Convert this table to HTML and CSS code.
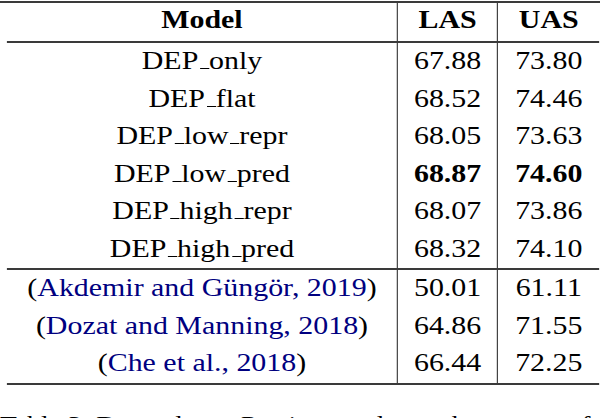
FILE: index.html
```html
<!DOCTYPE html>
<html lang="en">
<head>
<meta charset="utf-8">
<title>Table 3</title>
<link rel="stylesheet" href="styles.css">
</head>
<body>
<div class="page">
  <div class="toprule"></div>
  <div class="sheet">
    <div class="grid">
      <div class="cell head">Model</div>
      <div class="cell head num">LAS</div>
      <div class="cell head num">UAS</div>
      <div class="rule"></div>

      <div class="cell">DEP<span class="us"></span>only</div>
      <div class="cell num">67.88</div>
      <div class="cell num">73.80</div>

      <div class="cell">DEP<span class="us"></span>flat</div>
      <div class="cell num">68.52</div>
      <div class="cell num">74.46</div>

      <div class="cell">DEP<span class="us"></span>low<span class="us"></span>repr</div>
      <div class="cell num">68.05</div>
      <div class="cell num">73.63</div>

      <div class="cell">DEP<span class="us"></span>low<span class="us"></span>pred</div>
      <div class="cell num b">68.87</div>
      <div class="cell num b">74.60</div>

      <div class="cell">DEP<span class="us"></span>high<span class="us"></span>repr</div>
      <div class="cell num">68.07</div>
      <div class="cell num">73.86</div>

      <div class="cell">DEP<span class="us"></span>high<span class="us"></span>pred</div>
      <div class="cell num">68.32</div>
      <div class="cell num">74.10</div>
      <div class="rule"></div>

      <div class="cell">(<span class="cite">Akdemir and Güngör, 2019</span>)</div>
      <div class="cell num">50.01</div>
      <div class="cell num">61.11</div>

      <div class="cell">(<span class="cite">Dozat and Manning, 2018</span>)</div>
      <div class="cell num">64.86</div>
      <div class="cell num">71.55</div>

      <div class="cell">(<span class="cite">Che et al., 2018</span>)</div>
      <div class="cell num">66.44</div>
      <div class="cell num">72.25</div>
      <div class="rule"></div>
    </div>
    <p class="caption">Table 3: Dependency Parsing results on the test set of</p>
  </div>
</div>
</body>
</html>
```

FILE: styles.css
```css
body {
  margin: 0;
  background: #fff;
}

.page {
  width: 600px;
  height: 418px;
  overflow: hidden;
  font-family: "Liberation Serif", "Times New Roman", serif;
  color: #000;
}

.toprule {
  height: 2px;
  margin-top: 1px;
  background: #3a3a3a;
}

.sheet {
  width: 521.7px;
  transform: scaleX(1.15);
  transform-origin: 0 0;
}

.grid {
  display: grid;
  grid-template-columns: 339.1px 87px 89px;
  margin-left: 6.1px;
  font-size: 26px;
}

.cell {
  text-align: center;
  line-height: 35px;
  padding-bottom: 2.5px;
  white-space: nowrap;
}

.head {
  font-weight: bold;
  line-height: 33px;
  padding-bottom: 5px;
}

.num {
  border-left: 1.3px solid #3a3a3a;
}

.b {
  font-weight: bold;
}

.rule {
  grid-column: 1 / -1;
  height: 2px;
  background: #3a3a3a;
}

.cite {
  color: #000080;
}

.us {
  display: inline-block;
  width: 0.3em;
  height: 0;
  margin-left: 0.06em;
  border-bottom: 1.5px solid #000;
  vertical-align: baseline;
}

.caption {
  margin: 24px 0 0;
  font-size: 24px;
  line-height: 30px;
  white-space: nowrap;
}
```
